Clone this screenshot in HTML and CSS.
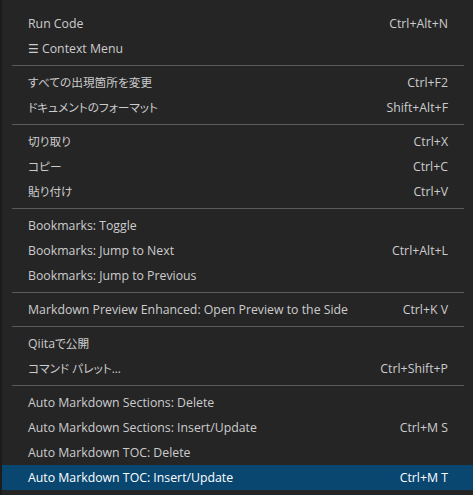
FILE: index.html
```html
<!DOCTYPE html>
<html lang="ja">
<head>
<meta charset="utf-8">
<title>Context Menu</title>
<link rel="stylesheet" href="styles.css">
</head>
<body>
<div class="menu">
  <div class="item"><span class="label">Run Code</span><span class="key">Ctrl+Alt+N</span></div>
  <div class="item"><span class="label"><span class="burger">☰</span> Context Menu</span><span class="key"></span></div>
  <div class="sep"></div>
  <div class="item"><span class="label ja">すべての出現箇所を変更</span><span class="key">Ctrl+F2</span></div>
  <div class="item"><span class="label ja">ドキュメントのフォーマット</span><span class="key">Shift+Alt+F</span></div>
  <div class="sep"></div>
  <div class="item"><span class="label ja">切り取り</span><span class="key">Ctrl+X</span></div>
  <div class="item"><span class="label ja">コピー</span><span class="key">Ctrl+C</span></div>
  <div class="item"><span class="label ja">貼り付け</span><span class="key">Ctrl+V</span></div>
  <div class="sep"></div>
  <div class="item"><span class="label">Bookmarks: Toggle</span><span class="key"></span></div>
  <div class="item"><span class="label">Bookmarks: Jump to Next</span><span class="key">Ctrl+Alt+L</span></div>
  <div class="item"><span class="label">Bookmarks: Jump to Previous</span><span class="key"></span></div>
  <div class="sep"></div>
  <div class="item"><span class="label">Markdown Preview Enhanced: Open Preview to the Side</span><span class="key">Ctrl+K V</span></div>
  <div class="sep"></div>
  <div class="item"><span class="label">Qiita<span class="ja">で公開</span></span><span class="key"></span></div>
  <div class="item"><span class="label ja">コマンド パレット...</span><span class="key">Ctrl+Shift+P</span></div>
  <div class="sep"></div>
  <div class="item"><span class="label">Auto Markdown Sections: Delete</span><span class="key"></span></div>
  <div class="item"><span class="label">Auto Markdown Sections: Insert/Update</span><span class="key">Ctrl+M S</span></div>
  <div class="item"><span class="label">Auto Markdown TOC: Delete</span><span class="key"></span></div>
  <div class="item active"><span class="label">Auto Markdown TOC: Insert/Update</span><span class="key">Ctrl+M T</span></div>
</div>
</body>
</html>
```
FILE: styles.css
```css
html, body {
  margin: 0;
  padding: 0;
  background: #1c1c1c;
  overflow: hidden;
}
body {
  width: 473px;
  height: 495px;
  font-family: "Open Sans", "Noto Sans CJK JP", sans-serif;
  font-size: 12.3px;
  color: #cccccc;
}
.menu {
  margin-left: 2px;
  width: 472px;
  height: 495px;
  box-sizing: border-box;
  background: #252526;
  padding-top: 11px;
}
.item {
  height: 23px;
  border-top: 1px solid transparent;
  border-bottom: 1px solid transparent;
  display: flex;
  align-items: center;
  justify-content: space-between;
  padding: 0 26px;
  line-height: 23px;
  white-space: nowrap;
}
.item.active {
  background: #094771;
  border-color: #094771;
  color: #ffffff;
}
.label {
  flex: 1 1 auto;
}
.ja {
  font-size: 11.7px;
  font-feature-settings: "palt";
}
.key {
  flex: 0 0 auto;
  padding-left: 20px;
}
.burger {
  font-family: "DejaVu Sans", sans-serif;
  font-size: 12px;
}
.sep {
  height: 1px;
  margin: 4px 10px;
  background: #5a5a5a;
}
```
